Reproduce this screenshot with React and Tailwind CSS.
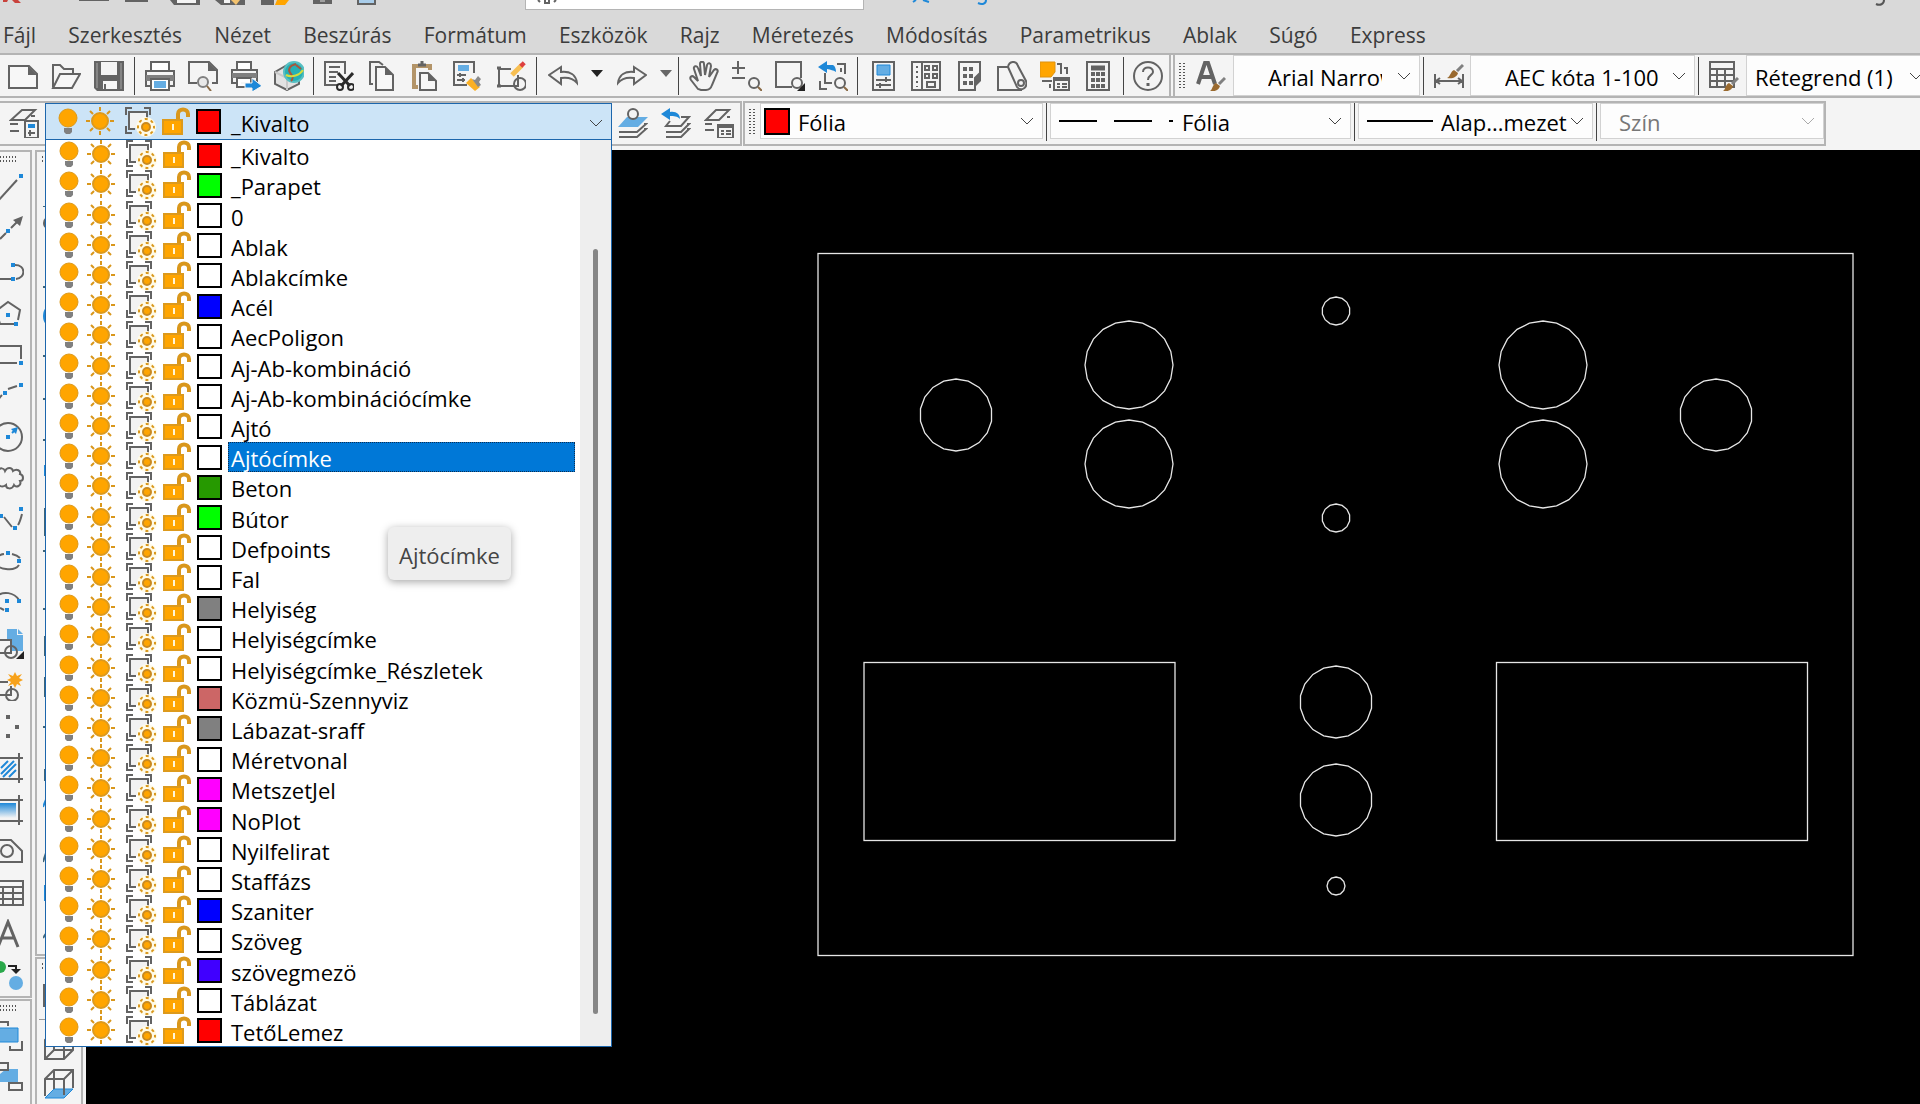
import { useState } from 'react';

const layers = [
  { name: '_Kivalto', color: '#ff0000' },
  { name: '_Parapet', color: '#00ff00' },
  { name: '0', color: '#ffffff' },
  { name: 'Ablak', color: '#ffffff' },
  { name: 'Ablakcímke', color: '#ffffff' },
  { name: 'Acél', color: '#0000ff' },
  { name: 'AecPoligon', color: '#ffffff' },
  { name: 'Aj-Ab-kombináció', color: '#ffffff' },
  { name: 'Aj-Ab-kombinációcímke', color: '#ffffff' },
  { name: 'Ajtó', color: '#ffffff' },
  { name: 'Ajtócímke', color: '#ffffff' },
  { name: 'Beton', color: '#269900' },
  { name: 'Bútor', color: '#00ff00' },
  { name: 'Defpoints', color: '#ffffff' },
  { name: 'Fal', color: '#ffffff' },
  { name: 'Helyiség', color: '#808080' },
  { name: 'Helyiségcímke', color: '#ffffff' },
  { name: 'Helyiségcímke_Részletek', color: '#ffffff' },
  { name: 'Közmü-Szennyviz', color: '#cc6666' },
  { name: 'Lábazat-sraff', color: '#808080' },
  { name: 'Méretvonal', color: '#ffffff' },
  { name: 'MetszetJel', color: '#ff00ff' },
  { name: 'NoPlot', color: '#ff00ff' },
  { name: 'Nyilfelirat', color: '#ffffff' },
  { name: 'Staffázs', color: '#ffffff' },
  { name: 'Szaniter', color: '#0000ff' },
  { name: 'Szöveg', color: '#ffffff' },
  { name: 'szövegmezö', color: '#4000ff' },
  { name: 'Táblázat', color: '#ffffff' },
  { name: 'TetőLemez', color: '#ff0000' },
];

const menus = [
  'Fájl', 'Szerkesztés', 'Nézet', 'Beszúrás', 'Formátum', 'Eszközök', 'Rajz',
  'Méretezés', 'Módosítás', 'Parametrikus', 'Ablak', 'Súgó', 'Express',
];

const G = '#636363';
const BLUE = '#1e88d8';
const SKY = '#64ade3';

function Icon({ children, w = 30, h = 30, vb = '0 0 30 30' }) {
  return (
    <svg width={w} height={h} viewBox={vb} fill="none" stroke={G} strokeWidth="2" className="block shrink-0" aria-hidden="true">
      {children}
    </svg>
  );
}

/* --- STANDARD TOOLBAR ICONS --- */
const brush = (
  <>
    <path d="M29 17 L23 23" stroke="#808080" strokeWidth="3" />
    <path d="M14 30 C17 28 16 24 20 22 L24 25 C23 29 19 31 14 30 Z" fill="#9a6a2f" stroke="none" />
  </>
);

const lens = (
  <>
    <circle cx="22" cy="22" r="5" fill="#f4f4f4" />
    <path d="M26 26 L30 30" stroke="#8a6a45" />
  </>
);

const std = {
  new: <><path d="M1 5 H21 L29 13 V27 H1 Z" fill="#f7f7f7" /><path d="M20 5 V14 H29 Z" fill={G} stroke="none" /></>,
  open: <><path d="M2 26 V4 H9 L13 8 H22 V13" /><path d="M2 27 L9 13 H29 L21 27 Z" fill="#f7f7f7" /></>,
  save: (
    <>
      <path d="M0 0 H30 V30 H3 L0 27 Z" fill={G} stroke="none" />
      <path d="M3 2 V27 M27 2 V28" stroke="#858585" />
      <path d="M7 1 H23 V14 H7 Z M9 20 H23 V28 H9 Z" fill="#f4f4f4" stroke="none" />
      <path d="M11 23 V28" />
    </>
  ),
  print: (
    <>
      <path d="M6 11 V1 H24 V11" fill="#fff" />
      <path d="M1 10 H29 V25 H1 Z" fill="#f4f4f4" />
      <path d="M1 14 H29 V20 H1 Z" fill="#808080" stroke="none" />
      <path d="M6 18 H24 V29 H6 Z" fill="#fff" />
      <path d="M9 20 H21 V27 H9 Z" fill={SKY} stroke="none" />
    </>
  ),
  preview: (
    <>
      <path d="M9 22 H1 V1 H21 L29 9 V22 H24" />
      <path d="M20 1 V10 H29 Z" fill={G} stroke="none" />
      <circle cx="15" cy="21" r="5" fill="#e8e8e8" stroke="#808080" />
      <path d="M19 25 L23 30" stroke="#8a6a45" />
    </>
  ),
  publish: (
    <>
      <path d="M6 10 V1 H20 V10" fill="#fff" />
      <path d="M1 9 H26 V22 H1 Z" fill="#f4f4f4" />
      <path d="M1 12 H26 V17 H1 Z" fill="#808080" stroke="none" />
      <path d="M6 17 H20 V26 H6 Z" fill="#fff" />
      <path d="M10 22 H21 V17 L31 25 L21 31 V27 H14 V22 Z" fill={BLUE} stroke="#f4f4f4" strokeWidth="1" />
    </>
  ),
  globe: (
    <>
      <path d="M13 4 L1 11 V23 L13 29 L25 23 V15" fill="#e2e2e2" />
      <path d="M1 11 L13 17 V29" stroke="#c8c8c8" />
      <circle cx="20" cy="11" r="10" fill="#25b0b5" stroke="#57bfc2" />
      <path d="M22 3 C14 5 14 10 17 13 C20 16 18 19 17 20 M22 4 L27 8" stroke="#a8553c" />
      <path d="M12 14 C18 17 26 14 29 9" stroke="#d5dc3d" />
    </>
  ),
  cut: (
    <>
      <path d="M13 24 H1 V1 H21 V13" />
      <path d="M5 6 H16 M5 11 H14 M5 16 H12 M5 20 H12" />
      <path d="M14 12 L26 25 M29 12 L17 25" stroke="#2b2b2b" strokeWidth="3" />
      <circle cx="16" cy="26" r="3" stroke="#2b2b2b" /><circle cx="27" cy="26" r="3" stroke="#2b2b2b" />
    </>
  ),
  copy: (
    <>
      <path d="M6 23 H3 V1 H12 L16 4" />
      <path d="M9 6 H18 L26 14 V29 H9 Z" fill="#f7f7f7" /><path d="M18 6 V14 H26 Z" fill={G} stroke="none" />
    </>
  ),
  paste: (
    <>
      <path d="M8 26 H4 V5 H20 V9" stroke="#b39468" strokeWidth="4" />
      <path d="M8 4 H16 M12 0 V4" strokeWidth="3" />
      <path d="M10 12 H18 L26 20 V29 H10 Z" fill="#f7f7f7" /><path d="M18 12 V20 H26 Z" fill={G} stroke="none" />
    </>
  ),
  match: (
    <>
      <path d="M14 24 H1 V1 H21 V12" />
      <path d="M5 4 H16 V10 H5 Z" fill={SKY} stroke="none" />
      <path d="M4 14 H13 M4 19 H12 M7 12 V16 M10 17 V21" />
      <path d="M13 22 L18 17 L27 26 L22 30 Z" fill="#fbb024" stroke="none" />
      <path d="M19 18 L22 19 L25 15 L28 18 L26 21 L28 24 L25 26 Z" fill="#8a8a8a" stroke="none" />
    </>
  ),
  block: (
    <>
      <path d="M15 8 H3 V25 H22 V14" /><circle cx="24" cy="23" r="6" />
      <path d="M16 14 L26 4" stroke="#f7bf52" strokeWidth="5" />
      <path d="M25 2 L28 5" stroke="#dd4040" strokeWidth="5" />
      <path d="M1 7 H5 M1 25 H5" strokeWidth="3" />
    </>
  ),
  undo: <path d="M1 14 L13 6 V11 C22 10 28 14 29 22 C25 17 20 16 13 17 V23 Z" />,
  redo: <path d="M29 14 L17 6 V11 C8 10 2 14 1 22 C5 17 10 16 17 17 V23 Z" />,
  hand: <path d="M9 28 L2 19 C0 16 3 14 5 16 L9 20 L5 8 C4 5 8 4 9 7 L12 15 L11 3 C11 0 15 0 15 3 L16 14 L18 4 C19 1 22 2 22 5 L20 16 L25 9 C27 7 30 9 28 12 L23 24 C22 27 20 29 17 29 H12 Z" />,
  zoomRt: <><path d="M0 7 H13 M6 0 V13 M0 17 H13" />{lens}</>,
  zoomWin: (
    <>
      <path d="M17 26 H1 V1 H26 V17" />{lens}
      <path d="M30 22 V30 H22 Z" fill="#222" stroke="none" />
    </>
  ),
  zoomPrev: (
    <>
      <path d="M19 3 H27 V13 M23 7 V11 M2 20 V28 H9 M7 12 V22 H14" />
      <path d="M0 6 L9 0 V4 H15 C17 5 18 8 18 11 C15 9 13 9 9 8 V12 Z" fill={BLUE} stroke="none" />{lens}
    </>
  ),
  props: (
    <>
      <path d="M5 1 H26 V29 H5 Z" />
      <path d="M9 4 H22 V14 H9 Z" fill={SKY} stroke={BLUE} strokeWidth="1" />
      <path d="M8 19 H23 M8 24 H23 M18 16 V21 M12 22 V27" />
    </>
  ),
  design: (
    <>
      <path d="M1 1 H29 V29 H1 Z M11 1 V29" />
      <path d="M14 5 H18 V9 H14 Z M22 5 H26 V9 H22 Z M14 13 H18 V17 H14 Z M22 13 H26 V17 H22 Z M16 21 H24 V26 H16 Z" />
      <path d="M6 5 V26" strokeDasharray="2 3" />
    </>
  ),
  palette: (
    <>
      <path d="M26 12 L21 17 V29 H5 V1 H26 Z" />
      <path d="M27 11 V20 L22 25 V16 Z" fill={G} stroke="none" />
      <path d="M11 6 V26 M17 6 V26" strokeWidth="4" strokeDasharray="4 3" />
    </>
  ),
  markup: (
    <>
      <path d="M11 6 H1 V29 H25" />
      <path d="M11 6 C12 0 19 -1 21 5 L29 20 C31 27 24 31 20 26 Z" fill="#f4f4f4" />
      <circle cx="24" cy="22" r="3" />
    </>
  ),
  sheet: (
    <>
      <path d="M0 1 H15 V11 L11 16 H0 Z" fill="#ffa500" stroke="#dd9210" strokeWidth="1" />
      <path d="M17 3 H21 V13 M24 7 H27 V13 M2 20 H12 M10 23 V27" />
      <path d="M14 17 H29 V29 H14 Z M14 19 H29 M17 23 H20 M22 23 H27 M17 26 H20 M22 26 H27" fill="#f4f4f4" />
    </>
  ),
  calc: (
    <>
      <path d="M4 1 H26 V29 H4 Z" /><path d="M8 7 H22" strokeWidth="5" />
      <path d="M8 13 H22 M8 19 H22 M8 25 H22" strokeWidth="4" strokeDasharray="4 1" />
    </>
  ),
  help: (
    <>
      <circle cx="15" cy="15" r="14" />
      <path d="M10 11 C10 5 20 5 20 11 C20 14 15 14 15 19" /><path d="M15 22 V25" strokeWidth="3" />
    </>
  ),
  textStyle: <><path d="M2 23 L9 2 H12 L19 23 M5 16 H16" strokeWidth="4" />{brush}</>,
  dimStyle: (
    <>
      <path d="M1 13 V27 M29 13 V27 M3 20 H27 M6 17 L2 20 L6 23 M24 17 L28 20 L24 23" />
      <path d="M29 4 L23 10" stroke="#808080" strokeWidth="3" />
      <path d="M13 17 C17 15 16 11 20 9 L24 12 C23 16 19 18 13 17 Z" fill="#9a6a2f" stroke="none" />
    </>
  ),
  tableStyle: <><path d="M1 1 H25 V26 H1 Z M1 8 H25 M1 14 H25 M1 20 H25 M8 8 V26 M16 8 V26" />{brush}</>,
};

/* --- LAYER TOOLBAR ICONS --- */
const layerIcons = {
  manager: (
    <>
      <path d="M13 2 H26 L16 12 H2 Z M22 8 H26 M9 16 H1 M10 23 H1" />
      <path d="M16 13 H29 V30 H16 Z" fill="#f4f4f4" />
      <path d="M19 18 H26" stroke={BLUE} strokeWidth="4" /><path d="M19 25 H26 M21 22 V28" />
    </>
  ),
  current: (
    <>
      <path d="M9 9 H30 L20 19 H0 Z" fill={SKY} stroke="none" />
      <path d="M26 16 H28 L19 24 H1 M26 21 H28 L19 29 H1" /><circle cx="15" cy="6" r="5" fill="#f4f4f4" />
    </>
  ),
  previous: (
    <>
      <path d="M20 9 H28 L20 18 H5 L9 13 M26 16 H28 L20 24 H5 M26 21 H28 L20 29 H5" />
      <path d="M0 6 L9 0 V4 C15 3 19 6 19 11 C16 8 13 8 9 8 V12 Z" fill={BLUE} stroke="none" />
    </>
  ),
  states: (
    <>
      <path d="M12 2 H25 L15 12 H2 Z M23 9 H26 M8 16 H1 M10 22 H1" />
      <path d="M14 17 H29 V30 H14 Z M14 19 H29 M17 23 H20 M22 23 H27 M17 26 H20 M22 26 H27" fill="#f4f4f4" />
    </>
  ),
};

/* --- DRAW TOOLBAR ICONS (left dock) --- */
const dot = (x, y) => <rect key={`${x}-${y}`} x={x - 2} y={y - 2} width="4" height="4" fill={BLUE} stroke="none" />;

const drawTools = [
  { name: 'Vonal', icon: <><path d="M4 27 L23 6" />{dot(27, 2)}</> },
  { name: 'Szerkesztővonal', icon: <><path d="M6 24 L12 18 M17 13 L24 6" /><path d="M29 1 L26 11 L19 5 Z" fill={G} stroke="none" />{dot(14, 16)}</> },
  { name: 'Vonallánc', icon: <><path d="M5 22 H17 M21 8 C32 8 32 21 22 22" />{dot(19, 8)}{dot(19, 22)}</> },
  { name: 'Sokszög', icon: <><path d="M20 26 H6 L2 13 L14 4 L26 12 L24 22" />{dot(14, 17)}{dot(22, 26)}</> },
  { name: 'Téglalap', icon: <><path d="M0 7 H27 V20 M23 24 H0" />{dot(27, 24)}</> },
  { name: 'Ív', icon: <><path d="M14 8 L23 5 M3 22 C4 18 6 16 8 14" />{dot(11, 12)}{dot(27, 4)}</> },
  { name: 'Kör', icon: <><circle cx="14" cy="15" r="14" /><path d="M18 11 L21 8" stroke={BLUE} /><path d="M24 5 L22 12 L17 7 Z" fill={BLUE} stroke="none" />{dot(14, 15)}</> },
  { name: 'Revíziófelhő', icon: <path d="M4 7 C6 3 10 4 11 7 C13 3 18 3 19 7 C23 4 27 7 26 10 C30 11 30 17 26 17 C28 22 22 24 20 21 C18 26 12 25 12 21 C8 24 4 22 3 18" /> },
  { name: 'Spline', icon: <><path d="M10 12 L18 22 M24 20 C26 17 27 13 28 9" />{dot(7, 11)}{dot(27, 4)}{dot(21, 23)}</> },
  { name: 'Ellipszis', icon: <><path d="M10 8 C0 9 -2 22 12 23 C19 24 23 22 25 19 M18 8 C22 9 24 10 26 12" />{dot(14, 7)}{dot(25, 15)}</> },
  { name: 'Ellipszisív', icon: <><path d="M3 8 C9 3 20 4 25 12 M6 20 L10 22" />{dot(13, 13)}{dot(25, 13)}{dot(13, 22)}</> },
  { name: 'Blokk beillesztése', icon: <><path d="M13 0 H23 V6 H29 V22 L13 22 Z" fill={SKY} stroke="none" /><path d="M24 0 L29 5 H24 Z" fill={SKY} stroke="none" /><path d="M0 11 H17 V24 H0" fill="#f4f4f4" /><circle cx="17" cy="23" r="6" /><path d="M30 22 V30 H22 Z" fill="#222" stroke="none" /></> },
  { name: 'Blokk létrehozása', icon: <><path d="M0 11 H14 M0 24 H17 V15" /><circle cx="18" cy="24" r="6" /><path d="M21 1 L23 5 L28 3 L25 7 L29 9 L25 11 L27 15 L23 13 L21 17 L19 13 L14 15 L17 11 L13 9 L17 7 L14 3 L19 5 Z" fill="#f7a21b" stroke="none" /></> },
  { name: 'Pont', icon: <path d="M12 5 H16 M12 24 H16 M21 15 H25 M2 15 H6" strokeWidth="4" /> },
  { name: 'Sraffozás', icon: <><path d="M0 5 H29 M25 0 V30 M0 26 H29" /><path d="M7 15 L14 8 M7 21 L20 8 M9 24 L22 11 M15 24 L22 17" stroke={BLUE} strokeWidth="2" /></> },
  { name: 'Színátmenet', icon: <><defs><linearGradient id="grad" x1="0" y1="0" x2="0" y2="1"><stop offset="0" stopColor="#1e88d8" /><stop offset="1" stopColor="#f4f4f4" /></linearGradient></defs><path d="M6 8 H22 V23 H6 Z" fill="url(#grad)" stroke="none" /><path d="M0 5 H29 M25 0 V30 M0 26 H29" /></> },
  { name: 'Régió', icon: <><path d="M0 4 H17 L28 15 V26 H0" /><circle cx="13" cy="15" r="6" /></> },
  { name: 'Táblázat', icon: <path d="M0 3 H29 V27 H0 M0 9 H29 M0 15 H29 M0 21 H29 M9 9 V27 M19 9 V27" /> },
  { name: 'Többsoros szöveg', icon: <path d="M4 28 L14 3 L24 28 M8 19 H20" strokeWidth="3" /> },
  { name: 'Kiválasztottak hozzáadása', icon: <><circle cx="6" cy="7" r="6" fill="#2aa84a" stroke="none" /><path d="M14 6 H22 V11" stroke="#222" /><path d="M17 9 H27 L22 14 Z" fill="#222" stroke="none" /><circle cx="22" cy="23" r="7" fill={SKY} stroke="none" /></> },
];

const orderTools = [
  { name: 'Előre hozás', icon: <><path d="M5 1 H14 V5 M28 20 V29 H16 V25" /><path d="M4 7 H24 V21 H4 Z" fill={SKY} stroke={BLUE} strokeWidth="1" /></> },
  { name: 'Hátra küldés', icon: <><path d="M12 7 H24 V20 H6 V12" fill={SKY} stroke="none" /><path d="M0 1 H14 V8 H0 Z M15 21 H28 V28 H15 Z" fill="#f4f4f4" /></> },
];

/* Modify toolbar, first pixels of each glyph */
const modifyTools = [
  { name: 'Törlés', d: 'M0 30 H4' },
  { name: 'Másolás', d: 'M4 0 C0 2 0 8 4 10', c: G },
  { name: 'Tükrözés', d: 'M0 28 H4' },
  { name: 'Eltolás', d: 'M4 8 C0 12 0 20 4 24', c: BLUE },
  { name: 'Kiosztás', d: 'M0 15 H4' },
  { name: 'Mozgatás', d: 'M0 16 H4' },
  { name: 'Forgatás', d: 'M0 16 H4' },
  { name: 'Lépték', d: 'M2 0 V11', c: BLUE },
  { name: 'Nyújtás', d: 'M2 2 V30' },
  { name: 'Metszés', d: 'M0 4 H4' },
  { name: 'Meghosszabbítás', d: 'M0 20 H4' },
  { name: 'Megtörés pontban', d: 'M2 6 V26' },
  { name: 'Megtörés', d: 'M2 6 V26' },
  { name: 'Összevonás', d: 'M0 15 H4' },
  { name: 'Letörés', d: 'M2 16 V28' },
  { name: 'Lekerekítés', d: 'M4 2 L0 12', c: BLUE },
  { name: 'Görbék egyesítése', d: 'M4 14 L0 26' },
  { name: 'Szétvetés', d: 'M2 8 V24', c: BLUE },
  { name: 'Igazítás', d: 'M4 14 L0 20' },
];

/* --- SMALL CONTROLS --- */
function ToolButton({ label, children }) {
  return (
    <button type="button" aria-label={label} className="flex h-full min-w-0 flex-1 items-center justify-center hover:bg-[#e0eefa]">
      {children}
    </button>
  );
}

function ToolGroup({ className, names }) {
  return (
    <div className={`flex h-full shrink-0 ${className}`}>
      {names.map((n) => (
        <ToolButton key={n} label={n}>
          <Icon>{std[n]}</Icon>
        </ToolButton>
      ))}
    </div>
  );
}

function Separator() {
  return <div className="mx-[3px] h-[38px] w-px shrink-0 bg-[#444]" />;
}

function Grip() {
  return (
    <svg width="6" height="26" viewBox="0 0 6 26" className="mx-[4px] shrink-0" aria-hidden="true">
      <path d="M1 0 V26 M5 0 V26" stroke="#555" strokeWidth="2" strokeDasharray="1 2" />
    </svg>
  );
}

function HGrip({ className }) {
  return (
    <svg width="18" height="6" viewBox="0 0 18 6" className={className} aria-hidden="true">
      <path d="M0 1 H18 M0 5 H18" stroke="#555" strokeWidth="2" strokeDasharray="1 2" />
    </svg>
  );
}

function Chevron({ className, color = '#444' }) {
  return (
    <svg width="14" height="8" viewBox="0 0 14 8" fill="none" stroke={color} strokeWidth="1" className={className} aria-hidden="true">
      <path d="M1 1 L7 7 L13 1" />
    </svg>
  );
}

function Combo({ label, value, className, selectClass, chevron = 'right-[8px]', disabled, children }) {
  return (
    <div className={`relative flex shrink-0 items-center border border-[#d2d2d2] bg-[#fdfdfd] ${className}`}>
      {children}
      <select aria-label={label} disabled={disabled} className={`h-full min-w-0 flex-1 appearance-none overflow-hidden whitespace-nowrap bg-transparent pt-[2px] text-black outline-none disabled:text-[#777] disabled:opacity-100 ${selectClass}`}>
        <option>{value}</option>
      </select>
      <Chevron className={`pointer-events-none absolute ${chevron}`} color={disabled ? '#aaa' : '#444'} />
    </div>
  );
}

/* --- LAYER LIST --- */
function Bulb() {
  return (
    <Icon>
      <circle cx="15" cy="11" r="9" fill="#ffa500" stroke="#dd9a1c" strokeWidth="1" />
      <path d="M11 21 H19 V25 L17 27 H13 L11 25 Z" fill="#808080" stroke="none" />
    </Icon>
  );
}

function Sun() {
  return (
    <Icon w={34} vb="0 0 34 30">
      <circle cx="17" cy="14" r="8" fill="#ffa500" stroke="#dd9a1c" />
      <path d="M3 14 H7 M27 14 H31 M17 0 V4 M17 24 V28 M7 4 L10 7 M24 21 L27 24 M7 24 L10 21 M24 7 L27 4" stroke="#d9971c" />
    </Icon>
  );
}

function Viewport() {
  return (
    <Icon w={40} vb="0 0 40 30">
      <path d="M12 5 H30 V21 H12 Z" fill="#f2f2f2" stroke="none" />
      <path d="M9 8 V1 H15 M27 1 H33 V8 M9 19 V26 H15 M18 22 H12 V5 H30 V12" />
      <circle cx="29" cy="20" r="10" fill="#fffbe8" stroke="none" />
      <circle cx="29" cy="20" r="4" fill="#ffa500" stroke="#c98a20" />
      <circle cx="29" cy="20" r="8" stroke="#d9971c" strokeDasharray="3 3.28" strokeDashoffset="1.5" />
    </Icon>
  );
}

function Lock() {
  return (
    <Icon w={36} vb="0 0 36 30">
      <path d="M21 12 V7 C21 1 31 1 31 7 V10" stroke="#d9971c" strokeWidth="4" />
      <path d="M6 13 H25 V27 H6 Z" fill="#ffa500" stroke="#dd9a1c" />
      <path d="M16 17 V23" stroke="#fff6d8" />
    </Icon>
  );
}

function LayerState({ name }) {
  return (
    <>
      <button type="button" aria-label={`${name} be/ki`} className="ml-2 shrink-0"><Bulb /></button>
      <button type="button" aria-label={`${name} fagyasztás`} className="shrink-0"><Sun /></button>
      <button type="button" aria-label={`${name} fagyasztás nézetablakban`} className="shrink-0"><Viewport /></button>
      <button type="button" aria-label={`${name} zárolás`} className="shrink-0"><Lock /></button>
    </>
  );
}

function Swatch({ color }) {
  return <span className="ml-[3px] h-[25px] w-[25px] shrink-0 border-2 border-black" style={{ backgroundColor: color }} />;
}

function LayerDropdown() {
  const [hovered, setHovered] = useState('Ajtócímke');

  return (
    <div className="relative h-[37px] w-[567px] shrink-0">
      <div className="flex h-full items-center border border-[#1c66ac] bg-[#cce4f7]">
        <div className="-ml-px flex h-[30px] flex-1 items-center">
          <LayerState name="_Kivalto" />
          <Swatch color="#ff0000" />
          <button type="button" aria-haspopup="listbox" aria-expanded="true" className="ml-[10px] flex flex-1 items-center justify-between pr-[8px] pt-[2px] text-left">
            _Kivalto
            <Chevron />
          </button>
        </div>
      </div>

      {/* Opened list */}
      <div className="absolute left-0 top-[36px] z-10 flex w-full border border-[#1c66ac] bg-white">
        <ul role="listbox" aria-label="Fóliák" className="flex h-[906px] flex-1 flex-col">
          {layers.map((layer) => (
            <li key={layer.name} role="option" aria-selected={hovered === layer.name} onMouseEnter={() => setHovered(layer.name)} className="flex min-h-0 flex-1 items-center">
              <LayerState name={layer.name} />
              <Swatch color={layer.color} />
              <span className={`ml-[6px] mr-[5px] flex h-full flex-1 items-center border border-dotted pl-[2px] pt-[2px] ${hovered === layer.name ? 'border-[#0a2f55] bg-[#0078d7] text-white' : 'border-transparent'}`}>
                {layer.name}
              </span>
            </li>
          ))}
        </ul>
        <div className="flex w-[31px] justify-center bg-[#eee] pb-[32px] pt-[109px]">
          <div className="w-[5px] rounded-full bg-[#868686]" />
        </div>
        <div role="tooltip" className="absolute left-[342px] top-[387px] rounded-md bg-[#eee] px-[11px] pb-[11px] pt-[14px] leading-[28px] text-[#444] shadow-[0_2px_8px_rgba(0,0,0,0.35)]">
          Ajtócímke
        </div>
      </div>
    </div>
  );
}

/* --- MODEL SPACE --- */
const circles = [
  { cx: 956, cy: 415, r: 36, n: 18 },
  { cx: 1129, cy: 365, r: 44, n: 20 },
  { cx: 1129, cy: 464, r: 44, n: 20 },
  { cx: 1336, cy: 311, r: 14, n: 14 },
  { cx: 1336, cy: 518, r: 14, n: 14 },
  { cx: 1543, cy: 365, r: 44, n: 20 },
  { cx: 1543, cy: 464, r: 44, n: 20 },
  { cx: 1716, cy: 415, r: 36, n: 18 },
  { cx: 1336, cy: 702, r: 36, n: 18 },
  { cx: 1336, cy: 800, r: 36, n: 18 },
  { cx: 1336, cy: 886, r: 9, n: 12 },
];

// coarse display tessellation of a circle
function facets({ cx, cy, r, n }) {
  return Array.from({ length: n }, (_, i) => {
    const a = (i / n) * Math.PI * 2;
    return `${(cx + r * Math.sin(a)).toFixed(1)},${(cy - r * Math.cos(a)).toFixed(1)}`;
  }).join(' ');
}

function Drawing() {
  return (
    <main className="min-w-0 flex-1 bg-black">
      <svg viewBox="86 150 1834 954" preserveAspectRatio="xMinYMin meet" fill="none" stroke="#e6e6e6" strokeWidth="1.3" className="block w-full">
        <rect x="818" y="253.5" width="1035" height="702" />
        <rect x="864" y="662.5" width="311" height="178" />
        <rect x="1496.5" y="662.5" width="311" height="178" />
        {circles.map((c) => (
          <polygon key={`${c.cx}-${c.cy}`} points={facets(c)} />
        ))}
      </svg>
    </main>
  );
}

export default function App() {
  return (
    <div className="flex min-h-screen flex-col overflow-hidden bg-[#f4f4f4] font-['Open_Sans','Noto_Sans',sans-serif] text-[22px] leading-[28px] text-black">
      {/* --- TITLE BAR + MENU --- */}
      <header className="bg-[#d9d9d9]">
        <div className="flex h-[10px] items-start overflow-hidden">
          <svg width="525" height="10" viewBox="0 0 525 10" className="shrink-0" aria-hidden="true">
            <path d="M3 0 H8 L7 2 H3 Z M12 0 H18 L21 3 H15 Z" fill="#c9423c" />
            <path d="M79 0 H109 V1 H79 Z M125 0 H148 V2 H125 Z M170 0 H200 V5 H174 Z M215 0 H245 V5 H221 Z M261 0 H274 V5 H261 Z M313 0 H332 V4 H313 Z" fill={G} />
            <path d="M177 0 H196 V3 H177 Z M224 0 H230 V3 H224 Z" fill="#f4f4f4" />
            <path d="M231 0 H240 L236 5 Z" fill="#f3c26e" />
            <path d="M277 0 H289 L285 5 H275 Z" fill="#ffa500" />
            <path d="M358 0 V4 H375 V0" fill="#a9cdea" stroke={G} strokeWidth="2" />
            <path d="M320 1 H325" stroke="#ddd" />
          </svg>
          <div className="relative h-[10px] w-[339px] shrink-0">
            <input type="search" aria-label="Keresés" className="block h-[10px] w-full border border-t-0 border-[#b4b4b4] bg-white" />
            <svg width="20" height="4" viewBox="0 0 20 4" className="pointer-events-none absolute left-[12px] top-0" aria-hidden="true">
              <path d="M1 0 L3 2 M8 0 V3 H12 V0 M19 0 L17 2" fill="none" stroke={G} strokeWidth="2" />
            </svg>
          </div>
          <svg width="130" height="10" viewBox="0 0 130 10" className="shrink-0" aria-hidden="true">
            <path d="M49 2 L52 0 M59 0 L65 2" stroke={BLUE} strokeWidth="2" />
            <path d="M114 3 C118 5 122 4 122 0" fill="none" stroke={BLUE} strokeWidth="2" />
          </svg>
          <svg width="60" height="10" viewBox="0 0 60 10" className="ml-auto shrink-0" aria-hidden="true">
            <path d="M16 4 C20 6 24 4 24 0" fill="none" stroke="#555" strokeWidth="2" />
          </svg>
        </div>
        <nav className="flex h-[43px] max-w-[1426px] items-center justify-between pl-[3px] pt-[7px] text-[21px] text-[#3c3c3c]">
          {menus.map((m) => (
            <button key={m} type="button" className="whitespace-nowrap">{m}</button>
          ))}
        </nav>
      </header>

      {/* --- STANDARD + STYLES TOOLBARS --- */}
      <div className="flex h-[45px] overflow-hidden border-y-2 border-[#b4b4b4]">
        <div className="flex shrink-0 items-center border-r-2 border-[#b4b4b4] pl-px">
          <ToolGroup className="w-[130px]" names={['new', 'open', 'save']} />
          <Separator />
          <ToolGroup className="w-[172px]" names={['print', 'preview', 'publish', 'globe']} />
          <Separator />
          <ToolGroup className="w-[216px]" names={['cut', 'copy', 'paste', 'match', 'block']} />
          <Separator />
          <div className="flex h-full w-[135px] shrink-0 items-center justify-between pl-[8px] pr-[3px]">
            <button type="button" aria-label="Vissza"><Icon>{std.undo}</Icon></button>
            <button type="button" aria-label="Vissza lista"><svg width="12" height="8" viewBox="0 0 12 8" className="mb-1"><path d="M0 0 H12 L6 7 Z" fill="#222" /></svg></button>
            <button type="button" aria-label="Újra"><Icon>{std.redo}</Icon></button>
            <button type="button" aria-label="Újra lista"><svg width="12" height="8" viewBox="0 0 12 8" className="mb-1"><path d="M0 0 H12 L6 7 Z" fill="#666" /></svg></button>
          </div>
          <Separator />
          <ToolGroup className="w-[172px]" names={['hand', 'zoomRt', 'zoomWin', 'zoomPrev']} />
          <Separator />
          <ToolGroup className="w-[259px]" names={['props', 'design', 'palette', 'markup', 'sheet', 'calc']} />
          <Separator />
          <ToolGroup className="w-[42px]" names={['help']} />
        </div>
        <div className="ml-[2px] flex min-w-0 flex-1 items-center border-l-2 border-[#b4b4b4]">
          <Grip />
          <ToolGroup className="w-[44px]" names={['textStyle']} />
          <Combo label="Szövegstílus" value="Arial Narrow" className="h-full w-[187px]" selectClass="ml-[34px] mr-[37px]" />
          <Separator />
          <ToolGroup className="w-[43px]" names={['dimStyle']} />
          <Combo label="Méretezési stílus" value="AEC kóta 1-100" className="h-full w-[225px]" selectClass="ml-[34px] mr-[34px]" />
          <Separator />
          <ToolGroup className="w-[44px]" names={['tableStyle']} />
          <Combo label="Táblázatstílus" value="Rétegrend (1)" className="h-full w-[180px]" selectClass="ml-[8px]" chevron="right-[2px]" />
        </div>
      </div>

      {/* --- LAYERS + PROPERTIES TOOLBARS --- */}
      <div className="flex h-[52px] pb-[4px] pt-[3px]">
        <div className="flex shrink-0 items-start border-y-2 border-r-2 border-[#b4b4b4]">
          <div className="flex h-[40px] w-[45px] shrink-0 items-center pl-[2px]">
            <ToolButton label="Fóliakezelő"><Icon>{layerIcons.manager}</Icon></ToolButton>
          </div>
          <LayerDropdown />
          <div className="flex h-[40px] w-[128px] shrink-0 items-center">
            <ToolButton label="Objektum fóliája legyen aktuális"><Icon>{layerIcons.current}</Icon></ToolButton>
            <ToolButton label="Előző fólia"><Icon>{layerIcons.previous}</Icon></ToolButton>
            <ToolButton label="Fóliaállapot-kezelő"><Icon>{layerIcons.states}</Icon></ToolButton>
          </div>
        </div>
        <div className="ml-px flex shrink-0 items-start border-2 border-[#b4b4b4]">
          <div className="flex h-[38px] items-center"><Grip /></div>
          <Combo label="Szín" value="Fólia" className="ml-px h-[36px] w-[283px]" selectClass="ml-[8px]">
            <span className="ml-[3px] h-[27px] w-[26px] shrink-0 border-2 border-black bg-[#ff0000]" />
          </Combo>
          <Separator />
          <Combo label="Vonaltípus" value="Fólia" className="h-[36px] w-[301px]" selectClass="ml-[9px]">
            <svg width="114" height="2" viewBox="0 0 114 2" className="ml-[8px] shrink-0" aria-hidden="true">
              <path d="M0 1 H38 M55 1 H93 M110 1 H114" stroke="#000" strokeWidth="2" />
            </svg>
          </Combo>
          <Separator />
          <Combo label="Vonalvastagság" value="Alap...mezet" className="h-[36px] w-[235px]" selectClass="ml-[8px] mr-[22px]">
            <svg width="66" height="2" viewBox="0 0 66 2" className="ml-[8px] shrink-0" aria-hidden="true">
              <path d="M0 1 H66" stroke="#000" strokeWidth="2" />
            </svg>
          </Combo>
          <Separator />
          <Combo label="Nyomtatási stílus" value="Szín" disabled className="h-[36px] w-[224px]" selectClass="ml-[18px]" />
        </div>
      </div>

      {/* --- DOCKS + MODEL SPACE --- */}
      <div className="flex flex-1">
        <aside className="flex w-[32px] shrink-0 flex-col">
          <div className="flex h-[848px] flex-col border-y-2 border-r-2 border-[#b4b4b4]">
            <HGrip className="mb-[6px] mt-[4px] shrink-0" />
            <div className="flex flex-1 flex-col">
              {drawTools.map((t) => (
                <button key={t.name} type="button" aria-label={t.name} className="flex min-h-0 flex-1 items-center">
                  <Icon w={24} vb="6 0 24 30">{t.icon}</Icon>
                </button>
              ))}
            </div>
          </div>
          <div className="mt-px flex flex-1 flex-col border-r-2 border-t-2 border-[#b4b4b4]">
            <HGrip className="mt-[4px]" />
            {orderTools.map((t) => (
              <button key={t.name} type="button" aria-label={t.name} className="mt-[8px] flex h-[33px] items-center">
                <Icon w={24} vb="6 0 24 30">{t.icon}</Icon>
              </button>
            ))}
          </div>
        </aside>

        <aside className="ml-[3px] mr-[3px] flex w-[48px] shrink-0 flex-col">
          <div className="flex h-[806px] flex-col border-2 border-[#b4b4b4]">
            <HGrip className="mb-[9px] ml-[5px] mt-[4px]" />
            {modifyTools.map((t) => (
              <button key={t.name} type="button" aria-label={t.name} className="flex min-h-0 flex-1 items-center pl-[6px]">
                <Icon w={4} vb="0 0 4 30"><path d={t.d} stroke={t.c || '#3f6478'} /></Icon>
              </button>
            ))}
          </div>
          <div className="mt-px flex flex-1 flex-col border-2 border-b-0 border-[#b4b4b4]">
            <HGrip className="ml-[5px] mt-[4px]" />
            <button type="button" aria-label="Nézetek" className="mt-[9px] flex h-[33px] items-center pl-[6px]">
              <Icon><path d="M1 4 V27" /></Icon>
            </button>
            <hr className="mx-[2px] mt-[8px] border-[#999]" />
            <button type="button" aria-label="Felülnézet" className="mt-[8px] flex h-[33px] items-center pl-[7px]">
              <Icon><path d="M1 10 L10 1 H29 V20 L20 29 H1 Z M1 10 H20 V29 M20 10 L29 1 M1 29 L10 20 H29 M10 1 V20" /></Icon>
            </button>
            <button type="button" aria-label="Alulnézet" className="mt-[6px] flex h-[33px] items-center pl-[7px]">
              <Icon>
                <path d="M1 29 L10 20 H29 L20 29 Z" fill={SKY} stroke={BLUE} strokeWidth="1" />
                <path d="M1 27 V10 L10 1 H29 V19 M1 10 H20 V26 M20 10 L29 1 M10 1 V20" />
              </Icon>
            </button>
          </div>
        </aside>

        <Drawing />
      </div>
    </div>
  );
}
